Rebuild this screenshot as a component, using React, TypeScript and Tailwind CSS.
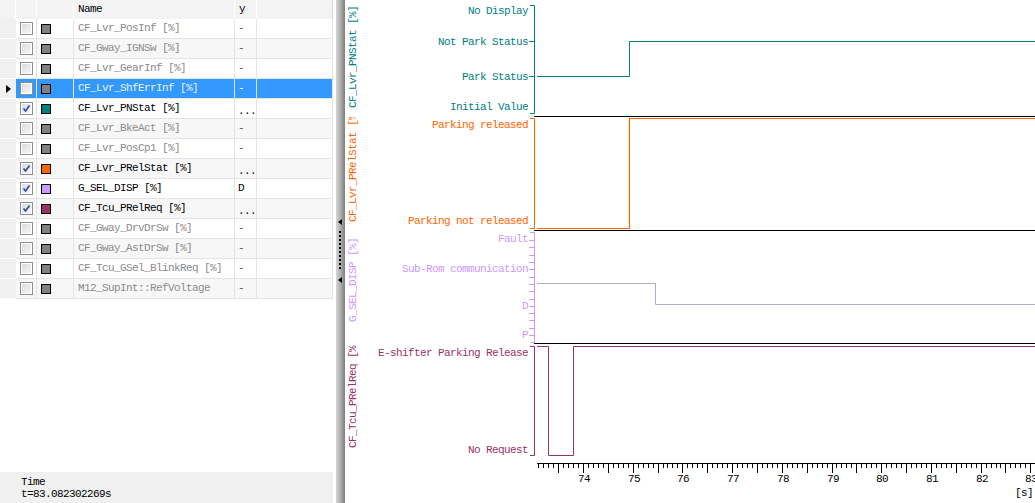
import React from "react";

const MONO = { fontFamily: '"Liberation Mono", "DejaVu Sans Mono", monospace' };

type Row = { name: string; color: string; checked: boolean; value: string; selected?: boolean };

const rows: Row[] = [
  { name: "CF_Lvr_PosInf [%]", color: "#808080", checked: false, value: "-" },
  { name: "CF_Gway_IGNSw [%]", color: "#808080", checked: false, value: "-" },
  { name: "CF_Lvr_GearInf [%]", color: "#808080", checked: false, value: "-" },
  { name: "CF_Lvr_ShfErrInf [%]", color: "#808080", checked: false, value: "-", selected: true },
  { name: "CF_Lvr_PNStat [%]", color: "#008080", checked: true, value: "..." },
  { name: "CF_Lvr_BkeAct [%]", color: "#808080", checked: false, value: "-" },
  { name: "CF_Lvr_PosCp1 [%]", color: "#808080", checked: false, value: "-" },
  { name: "CF_Lvr_PRelStat [%]", color: "#ff6600", checked: true, value: "..." },
  { name: "G_SEL_DISP [%]", color: "#cc99ff", checked: true, value: "D" },
  { name: "CF_Tcu_PRelReq [%]", color: "#993366", checked: true, value: "..." },
  { name: "CF_Gway_DrvDrSw [%]", color: "#808080", checked: false, value: "-" },
  { name: "CF_Gway_AstDrSw [%]", color: "#808080", checked: false, value: "-" },
  { name: "CF_Tcu_GSel_BlinkReq [%]", color: "#808080", checked: false, value: "-" },
  { name: "M12_SupInt::RefVoltage", color: "#808080", checked: false, value: "-" },
];

function CheckBox({ checked }: { checked: boolean }) {
  return (
    <div className="w-[13px] h-[13px] border border-[#8e8f8f] bg-white p-[1px]">
      <div className="w-full h-full bg-gradient-to-br from-[#dcdcdc] to-[#f6f6f6] relative">
        {checked && (
          <svg width="9" height="9" viewBox="0 0 9 9" className="absolute inset-0">
            <path d="M1.5 4.5 L3.5 7 L7.5 1.5" fill="none" stroke="#2b46a8" strokeWidth="1.6" />
          </svg>
        )}
      </div>
    </div>
  );
}

function SignalTable() {
  return (
    <div className="flex-1 bg-white" style={MONO}>
      {/* header */}
      <div className="flex h-[19px] bg-[#f3f3f3] text-[11px] tracking-[-0.6px] text-black">
        <div className="w-[16px] border-r border-white" />
        <div className="w-[21px] border-r border-white" />
        <div className="w-[37px] border-r border-white" />
        <div className="w-[161px] border-r border-white pl-[4px] leading-[19px]">Name</div>
        <div className="w-[22px] border-r border-white pl-[4px] leading-[19px]">y</div>
        <div className="w-[76px] border-r border-[#d8d8d8]" />
      </div>
      {rows.map((r, i) => {
        const alt = i % 2 === 1;
        const bg = r.selected ? "bg-[#3399ff]" : alt ? "bg-[#f7f7f7]" : "bg-white";
        const txt = r.selected ? "text-[#e8f2ff]" : r.checked ? "text-black" : "text-[#8a8a8a]";
        return (
          <div key={r.name} className="flex h-[20px] text-[11px] tracking-[-0.6px]">
            <div className="w-[16px] bg-[#f0f0f0] border-b border-white flex items-center justify-center">
              {r.selected && (
                <svg width="5" height="8" viewBox="0 0 5 8">
                  <path d="M0 0 L5 4 L0 8 Z" fill="#000" />
                </svg>
              )}
            </div>
            <div className={`w-[21px] ${bg} border-r border-b border-[#e4e4e4] flex items-center justify-center`}>
              <CheckBox checked={r.checked} />
            </div>
            <div className={`w-[37px] ${bg} border-r border-b border-[#e4e4e4] flex items-center pl-[4px]`}>
              <div className="w-[10px] h-[10px] border border-black" style={{ background: r.color }} />
            </div>
            <div className={`w-[161px] ${bg} ${txt} border-r border-b border-[#e4e4e4] pl-[4px] leading-[19px] whitespace-nowrap overflow-hidden`}>
              {r.name}
            </div>
            <div
              className={`w-[22px] ${bg} border-r border-b border-[#e4e4e4] pl-[3px] leading-[19px] ${
                r.selected ? "text-white" : r.value === "-" ? "text-[#555]" : "text-black"
              } ${r.value === "..." ? "pt-[3px]" : ""}`}
            >
              {r.value}
            </div>
            <div className={`w-[76px] ${bg} border-r border-b border-[#e4e4e4]`} />
          </div>
        );
      })}
    </div>
  );
}

// time -> x in page coordinates
const tx = (t: number) => 583 + (t - 74) * 49.7;

const TEAL = "#008080";
const ORANGE = "#ff6600";
const LAV = "#cc99ff";
const MAROON = "#993366";

function Bracket({ top, bottom, color, ticks }: { top: number; bottom: number; color: string; ticks: number[] }) {
  return (
    <g stroke={color} strokeWidth="1" fill="none">
      <path d={`M530 ${top + 0.5} H534.5 V${bottom + 0.5} H530`} />
      {ticks.map((y) => (
        <path key={y} d={`M529 ${y + 0.5} H534`} />
      ))}
    </g>
  );
}

function Chart() {
  const labelProps = { fontSize: 11, letterSpacing: "-0.6px", ...MONO } as const;
  const ticks = [];
  for (let n = 731; n <= 831; n++) {
    const x = Math.round(tx(n / 10)) + 0.5;
    const long = n % 5 === 0;
    ticks.push(<path key={n} d={`M${x} 463 V${long ? 473 : 468}`} stroke="#000" strokeWidth="1" />);
  }
  const secs = [74, 75, 76, 77, 78, 79, 80, 81, 82, 83];
  const lavTicks = Array.from({ length: 14 }, (_, k) => Math.round(335 - k * 7.3));

  return (
    <svg width="690" height="503" viewBox="345 0 690 503" className="block">
      <defs>
        <clipPath id="p1"><rect x="345" y="0" width="15" height="115" /></clipPath>
        <clipPath id="p2"><rect x="345" y="117" width="15" height="113" /></clipPath>
        <clipPath id="p3"><rect x="345" y="231" width="15" height="113" /></clipPath>
        <clipPath id="p4"><rect x="345" y="345" width="15" height="115" /></clipPath>
      </defs>

      {/* vertical axis names */}
      <g {...labelProps}>
        <g clipPath="url(#p1)">
          <text transform="translate(356 108) rotate(-90)" fill={TEAL}>CF_Lvr_PNStat [%]</text>
        </g>
        <g clipPath="url(#p2)">
          <text transform="translate(356 222) rotate(-90)" fill={ORANGE}>CF_Lvr_PRelStat [%]</text>
        </g>
        <g clipPath="url(#p3)">
          <text transform="translate(356 322) rotate(-90)" fill={LAV}>G_SEL_DISP [%]</text>
        </g>
        <g clipPath="url(#p4)">
          <text transform="translate(356 448) rotate(-90)" fill={MAROON}>CF_Tcu_PRelReq [%]</text>
        </g>
      </g>

      {/* value labels */}
      <g {...labelProps} textAnchor="end">
        <text x="528" y="14" fill={TEAL}>No Display</text>
        <text x="528" y="45" fill={TEAL}>Not Park Status</text>
        <text x="528" y="80" fill={TEAL}>Park Status</text>
        <text x="528" y="110" fill={TEAL}>Initial Value</text>

        <text x="528" y="128" fill={ORANGE}>Parking released</text>
        <text x="528" y="224" fill={ORANGE}>Parking not released</text>

        <text x="528" y="242" fill={LAV}>Fault</text>
        <text x="528" y="272" fill={LAV}>Sub-Rom communication</text>
        <text x="528" y="309" fill={LAV}>D</text>
        <text x="528" y="338" fill={LAV}>P</text>

        <text x="528" y="356" fill={MAROON}>E-shifter Parking Release</text>
        <text x="528" y="453" fill={MAROON}>No Request</text>
      </g>

      {/* axis brackets */}
      <Bracket top={5} bottom={113} color={TEAL} ticks={[41, 76]} />
      <Bracket top={118} bottom={228} color={ORANGE} ticks={[]} />
      <Bracket top={232} bottom={342} color={LAV} ticks={lavTicks} />
      <Bracket top={346} bottom={455} color={MAROON} ticks={[]} />

      {/* panel separators */}
      <g stroke="#000" strokeWidth="1">
        <path d="M534 116.5 H1035" />
        <path d="M534 230.5 H1035" />
        <path d="M534 343.5 H1035" />
      </g>

      {/* signals */}
      <g fill="none" strokeWidth="1">
        <path d="M537 76.5 H629.5 V41.5 H1035" stroke={TEAL} />
        <path d="M537 228.5 H629.5 V118.5 H1035" stroke={ORANGE} strokeWidth="1.2" />
        <path d="M537 283.5 H655.5 V304.5 H1035" stroke="#b4a8c8" />
        <path d="M537 346.5 H548.5 V455.5 H573.5 V346.5 H1035" stroke={MAROON} />
      </g>

      {/* time axis */}
      <path d="M537 463.5 H1035" stroke="#000" strokeWidth="1" />
      {ticks}
      <g {...labelProps} textAnchor="middle" fill="#000">
        {secs.map((s) => (
          <text key={s} x={Math.round(tx(s)) + 1} y="482">{s}</text>
        ))}
        <text x="1024" y="496">[s]</text>
      </g>
    </svg>
  );
}

function Splitter() {
  return (
    <div className="w-[12px] flex">
      <div className="w-[3px] bg-white" />
      <div className="w-[9px] bg-gradient-to-r from-[#d6d6d6] via-[#b0b0b0] to-[#7e7e7e] flex flex-col items-center pt-[219px]">
        <svg width="4" height="6" viewBox="0 0 4 6" className="-ml-[2px]">
          <path d="M0 3 L4 0 L4 6 Z" fill="#000" />
        </svg>
        <div className="mt-[6px] h-[40px] w-[2px] -ml-[2px] bg-[repeating-linear-gradient(to_bottom,#000_0px,#000_2px,transparent_2px,transparent_4px)]" />
        <svg width="4" height="6" viewBox="0 0 4 6" className="mt-[6px] -ml-[2px]">
          <path d="M0 3 L4 0 L4 6 Z" fill="#000" />
        </svg>
      </div>
    </div>
  );
}

export default function App() {
  return (
    <div className="flex w-[1035px] h-[503px] bg-white overflow-hidden">
      <div className="w-[333px] flex flex-col">
        <SignalTable />
        <div className="h-[31px] bg-[#f0f0f0] pl-[21px] pt-[4px] text-[11px] tracking-[-0.6px] leading-[12px] text-black" style={MONO}>
          <div>Time</div>
          <div>t=83.082302269s</div>
        </div>
      </div>
      <Splitter />
      <div className="flex-1 bg-white">
        <Chart />
      </div>
    </div>
  );
}
